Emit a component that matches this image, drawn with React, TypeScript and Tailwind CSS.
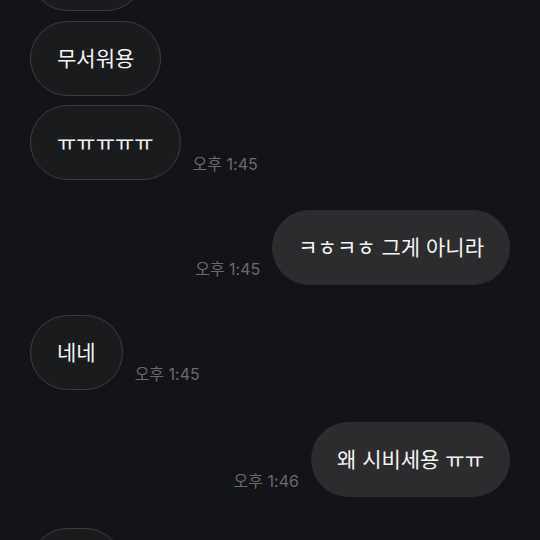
const font = "font-['Inter','Noto_Sans_CJK_KR',sans-serif]";

interface Msg {
  text: string;
  mine?: boolean;
  time?: string;
  gap: string;
  width?: string;
}

const messages: Msg[] = [
  { text: "ㅋㅋㅋ", gap: "-mt-[64px]", width: "w-[114px]" },
  { text: "무서워용", gap: "mt-[10px]" },
  { text: "ㅠㅠㅠㅠㅠ", time: "오후 1:45", gap: "mt-[9px]" },
  { text: "ㅋㅎㅋㅎ 그게 아니라", mine: true, time: "오후 1:45", gap: "mt-[30px]" },
  { text: "네네", time: "오후 1:45", gap: "mt-[30px]" },
  { text: "왜 시비세용 ㅠㅠ", mine: true, time: "오후 1:46", gap: "mt-[32px]" },
  { text: "ㅇㅇ", gap: "mt-[31px]" },
];

const Time = ({ time }: { time: string }) => (
  <span className="mb-[7px] text-[16px] leading-[18px] text-[#6a6a6e] whitespace-nowrap">
    {time}
  </span>
);

const Bubble = ({ msg }: { msg: Msg }) => {
  const base =
    "h-[75px] flex items-center justify-center rounded-full px-[26px] text-[21px] text-[#f4f4f5] whitespace-nowrap shrink-0";
  const look = msg.mine
    ? "bg-[#2c2c2e]"
    : "bg-[#1a1b1d] border border-[#3b3c3f]";
  return <div className={`${base} ${look} ${msg.width ?? ""}`}>{msg.text}</div>;
};

export default function App() {
  return (
    <div className={`w-[540px] h-[540px] overflow-hidden bg-[#131417] ${font}`}>
      <div className="flex flex-col">
        {messages.map((m, i) =>
          m.mine ? (
            <div key={i} className={`flex items-end justify-end gap-3 pr-[30px] ${m.gap}`}>
              {m.time && <Time time={m.time} />}
              <Bubble msg={m} />
            </div>
          ) : (
            <div key={i} className={`flex items-end gap-3 pl-[30px] ${m.gap}`}>
              <Bubble msg={m} />
              {m.time && <Time time={m.time} />}
            </div>
          )
        )}
      </div>
    </div>
  );
}
